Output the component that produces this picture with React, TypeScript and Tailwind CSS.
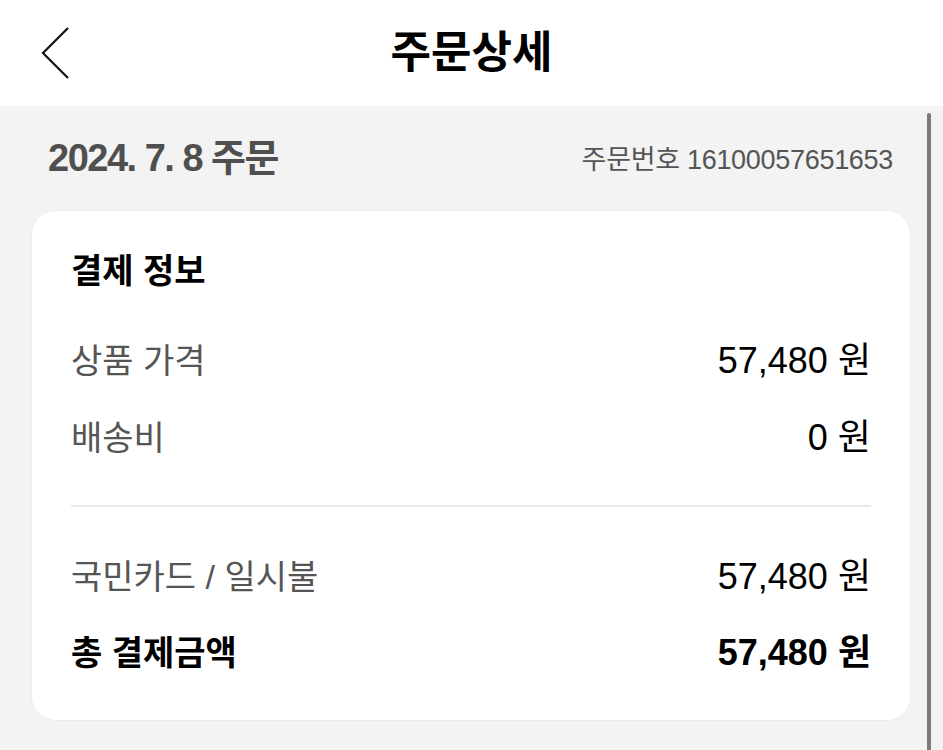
const FONT = "font-['Liberation_Sans','Noto_Sans_CJK_KR',sans-serif]";

type RowProps = {
  label: string;
  amount: string;
  bold?: boolean;
};

const PriceRow = ({ label, amount, bold = false }: RowProps) => {
  return (
    <div className="flex h-10 items-center justify-between">
      <span
        className={
          bold
            ? "text-[34px] font-bold leading-10 text-black"
            : "text-[34px] leading-10 text-[#555555]"
        }
      >
        {label}
      </span>
      <span
        className={
          bold
            ? "text-[36px] font-bold leading-10 text-black"
            : "text-[36px] leading-10 text-black"
        }
      >
        {amount}
      </span>
    </div>
  );
};

export default function App() {
  return (
    <div className={`relative h-[750px] w-[943px] overflow-hidden bg-[#f3f3f3] ${FONT}`}>
      <header className="relative flex h-[106px] items-center justify-center bg-white">
        <button className="absolute left-[40px] top-[26px] flex h-[54px] w-[30px] items-center justify-center">
          <svg width="30" height="54" viewBox="0 0 30 54" fill="none">
            <path d="M28 2 L3 27 L28 52" stroke="#111" strokeWidth="2.2" />
          </svg>
        </button>
        <h1 className="text-[44px] font-bold leading-none text-black">주문상세</h1>
      </header>

      <main className="px-[31px] pr-[32px]">
        <div className="flex h-[104px] items-center justify-between pl-[17px] pr-[18px]">
          <span className="text-[38px] font-bold tracking-[-1.5px] text-[#4f4f4f]">
            2024. 7. 8 주문
          </span>
          <span className="pt-1 text-[27px] tracking-[-0.3px] text-[#555555]">
            주문번호 16100057651653
          </span>
        </div>

        <section className="rounded-[24px] border border-[#ececec] bg-white px-[39px] pb-[47px] pt-[40px]">
          <h2 className="text-[34px] font-bold leading-10 text-black">결제 정보</h2>
          <div className="mt-[50px] flex flex-col gap-[37px]">
            <PriceRow label="상품 가격" amount="57,480 원" />
            <PriceRow label="배송비" amount="0 원" />
          </div>
          <div className="mt-[47px] h-[2px] bg-[#e8e8e8]" />
          <div className="mt-[50px] flex flex-col gap-[36px]">
            <PriceRow label="국민카드 / 일시불" amount="57,480 원" />
            <PriceRow label="총 결제금액" amount="57,480 원" bold />
          </div>
        </section>
      </main>

      <div className="absolute right-[12px] top-[113px] h-[660px] w-[4px] rounded-full bg-[#7a7a7a]" />
    </div>
  );
}
